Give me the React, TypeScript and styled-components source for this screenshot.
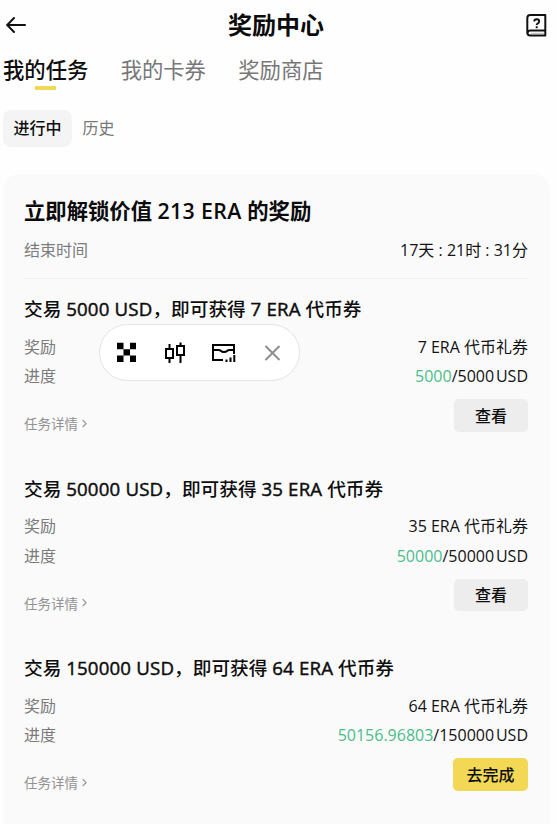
import React from "react";
import styled, { createGlobalStyle, css } from "styled-components";

const GlobalStyle = createGlobalStyle`
  * { box-sizing: border-box; }
  html, body { margin: 0; background: #fefefe; }
  body {
    height: 824px;
    overflow: hidden;
    color: #121212;
    font-family: "Open Sans", "Noto Sans CJK SC", sans-serif;
    font-size: 16px;
  }
  button { font-family: inherit; border: 0; padding: 0; color: inherit; background: none; }
`;

const Page = styled.main`
  width: 557px;
  height: 824px;
  overflow: hidden;
  padding: 0 7px 0 3px;
`;

const Header = styled.header`
  height: 50px;
  display: grid;
  grid-template-columns: 40px 1fr 40px;
  align-items: center;
  svg { display: block; }
`;

const PageTitle = styled.h1`
  margin: 0;
  padding-right: 1px;
  text-align: center;
  font-size: 24px;
  line-height: 30px;
  font-weight: 700;
  color: #0b0b0b;
`;

const HeaderAction = styled.button<{ $end?: boolean }>`
  display: flex;
  justify-content: ${(p) => (p.$end ? "flex-end" : "flex-start")};
  padding: ${(p) => (p.$end ? "0 2px 0 0" : "0 0 0 2px")};
`;

const Tabs = styled.nav`
  display: flex;
  gap: 32.3px;
  height: 60px;
  padding-top: 5px;
`;

const Tab = styled.button<{ $active?: boolean }>`
  display: flex;
  flex-direction: column;
  align-items: center;
  height: 36px;
  font-size: 21.33px;
  line-height: 30px;
  font-weight: ${(p) => (p.$active ? 500 : 400)};
  color: ${(p) => (p.$active ? "#0d0d0d" : "#777")};
  ${(p) =>
    p.$active &&
    css`
      &::after {
        content: "";
        width: 21px;
        height: 4px;
        margin-top: 0.5px;
        background: #f0d857;
      }
    `}
`;

const Filters = styled.div`
  display: flex;
  height: 37px;
`;

const Filter = styled.button<{ $active?: boolean }>`
  height: 37px;
  padding: 0 10.5px 3px;
  border-radius: 8px;
  font-size: 16px;
  font-weight: ${(p) => (p.$active ? 500 : 400)};
  color: ${(p) => (p.$active ? "#0d0d0d" : "#777")};
  background: ${(p) => (p.$active ? "#f4f4f4" : "transparent")};
`;

const Card = styled.section`
  margin-top: 27px;
  height: 700px;
  padding: 22px 22px 0 21px;
  border-radius: 16px;
  background: #fafafa;
`;

const CardTitle = styled.h2`
  margin: 0;
  font-size: 21.33px;
  line-height: 30px;
  font-weight: 700;
  color: #0b0b0b;
  white-space: nowrap;
`;

const Row = styled.div`
  display: flex;
  justify-content: space-between;
  align-items: center;
  height: 29.5px;
  line-height: 24px;
  white-space: nowrap;
`;

const Deadline = styled(Row)`
  height: 53px;
  padding-bottom: 5px;
  border-bottom: 1px solid #f0f0f0;
`;

const Label = styled.span`
  color: #7b7b7b;
`;

const BoldLatin = styled.span`
  font-weight: 600;
  letter-spacing: 0.35px;
`;

const MediumLatin = styled.span`
  letter-spacing: 0.17px;
  -webkit-text-stroke: 0.45px currentColor;
`;

const Progress = styled.span`
  word-spacing: -2.3px;
`;

const Task = styled.article`
  height: 179.5px;
  padding-top: 15px;
`;

const TaskTitle = styled.h3`
  margin: 0 0 8px;
  font-size: 18.67px;
  line-height: 30px;
  font-weight: 500;
  color: #0d0d0d;
  white-space: nowrap;
`;

const Done = styled.span`
  color: #4abd8a;
`;

const TaskFooter = styled.div`
  display: flex;
  justify-content: space-between;
  height: 50px;
  padding-top: 8.3px;
`;

const Details = styled.button`
  display: flex;
  align-items: center;
  gap: 4px;
  height: 20px;
  margin-top: 14px;
  font-size: 13.5px;
  color: #929292;
`;

const Action = styled.button<{ $primary?: boolean }>`
  width: ${(p) => (p.$primary ? 75 : 74)}px;
  height: 32.5px;
  padding-bottom: 2px;
  border-radius: 5px;
  font-size: 16px;
  font-weight: 500;
  color: #0d0d0d;
  background: ${(p) => (p.$primary ? "#f2d855" : "#ededed")};
`;

const FloatingBar = styled.div`
  position: absolute;
  left: 99px;
  top: 324px;
  width: 201px;
  height: 57px;
  border: 1px solid #e4e4e4;
  border-radius: 29px;
  background: #fff;
  display: flex;
  align-items: center;
  padding-left: 15px;
  gap: 24px;
`;

const ToolButton = styled.button`
  width: 24.5px;
  height: 24px;
  flex: none;
  svg { display: block; }
`;

const BackIcon = () => (
  <svg width="22" height="18" viewBox="0 0 22 18" fill="none" stroke="#111" strokeWidth="2" strokeLinecap="round">
    <path d="M20 9H2.4M9 2 2.2 9 9 16" />
  </svg>
);

const GuideIcon = () => (
  <svg width="22" height="24" viewBox="0 0 22 24" fill="none" stroke="#111" strokeWidth="2" strokeLinejoin="round">
    <path d="M19.3 2H4.3Q1.3 2 1.3 5v14.5q0 3 3 3h15ZM1.6 20q.2-2.4 3-2.4h14.7" />
    <path d="M5 20.3h13" strokeWidth="0.7" stroke="#999" />
    <path d="M8.2 8.6q0-2.4 2.5-2.4t2.5 2.3q0 1.2-1.3 1.9t-1.2 1.6M10.7 13.2v2" strokeWidth="1.9" />
  </svg>
);

const LogoIcon = () => (
  <svg width="24" height="24" viewBox="0 0 24 24">
    <path d="M2 1.7h6.5v6.5H2zM15 1.7h6v6.5h-6zM8.5 8.2H15v6.3H8.5zM2 14.5h6.5V21H2zM15 14.5h6V21h-6z" />
  </svg>
);

const CandlesIcon = () => (
  <svg width="24" height="24" viewBox="0 0 24 24" fill="none" stroke="#000" strokeWidth="2">
    <path d="M2 8h7v9H2zM13 5h7v9h-7zM5.5 3v5M5.5 17v5M16.5 1.5V5M16.5 14v8" />
  </svg>
);

const ChartMailIcon = () => (
  <svg width="24" height="24" viewBox="0 0 24 24" fill="none" stroke="#000" strokeWidth="2">
    <path d="M11 19H1V4h21v9M1 9h5.5q1.5 0 2.5 1t3 1 3-1 2.5-1H22" />
    <path d="M14.5 18.5V21M18.5 16.5V21M22.3 14v7" />
  </svg>
);

const CloseIcon = () => (
  <svg width="24" height="24" viewBox="0 0 24 24" fill="none" stroke="#8e8e8e" strokeWidth="2">
    <path d="m4.5 5 14 14M18.5 5l-14 14" />
  </svg>
);

const Chevron = () => (
  <svg width="5" height="9" viewBox="0 0 5 9" fill="none" stroke="#929292" strokeWidth="1.2">
    <path d="m.7 1.2 3.3 3.5L.7 8.2" />
  </svg>
);

const tasks = [
  { target: "5000", done: "5000", amount: "7", action: "查看", primary: false },
  { target: "50000", done: "50000", amount: "35", action: "查看", primary: false },
  { target: "150000", done: "50156.96803", amount: "64", action: "去完成", primary: true },
];

export default function App() {
  return (
    <Page>
      <GlobalStyle />
      <Header>
        <HeaderAction aria-label="返回"><BackIcon /></HeaderAction>
        <PageTitle>奖励中心</PageTitle>
        <HeaderAction $end aria-label="帮助"><GuideIcon /></HeaderAction>
      </Header>
      <Tabs>
        <Tab $active>我的任务</Tab>
        <Tab>我的卡券</Tab>
        <Tab>奖励商店</Tab>
      </Tabs>
      <Filters>
        <Filter $active>进行中</Filter>
        <Filter>历史</Filter>
      </Filters>
      <Card>
        <CardTitle>立即解锁价值 <BoldLatin>213 ERA</BoldLatin> 的奖励</CardTitle>
        <Deadline>
          <Label>结束时间</Label>
          <span>17天 : 21时 : 31分</span>
        </Deadline>
        {tasks.map((t) => (
          <Task key={t.target}>
            <TaskTitle>
              交易 <MediumLatin>{t.target} USD</MediumLatin>，即可获得 <MediumLatin>{t.amount} ERA</MediumLatin> 代币券
            </TaskTitle>
            <Row>
              <Label>奖励</Label>
              <span>{t.amount} ERA 代币礼券</span>
            </Row>
            <Row>
              <Label>进度</Label>
              <Progress><Done>{t.done}</Done>/{t.target} USD</Progress>
            </Row>
            <TaskFooter>
              <Details>任务详情<Chevron /></Details>
              <Action $primary={t.primary}>{t.action}</Action>
            </TaskFooter>
          </Task>
        ))}
      </Card>
      <FloatingBar>
        <ToolButton aria-label="OKX"><LogoIcon /></ToolButton>
        <ToolButton aria-label="行情"><CandlesIcon /></ToolButton>
        <ToolButton aria-label="资讯"><ChartMailIcon /></ToolButton>
        <ToolButton aria-label="关闭"><CloseIcon /></ToolButton>
      </FloatingBar>
    </Page>
  );
}
